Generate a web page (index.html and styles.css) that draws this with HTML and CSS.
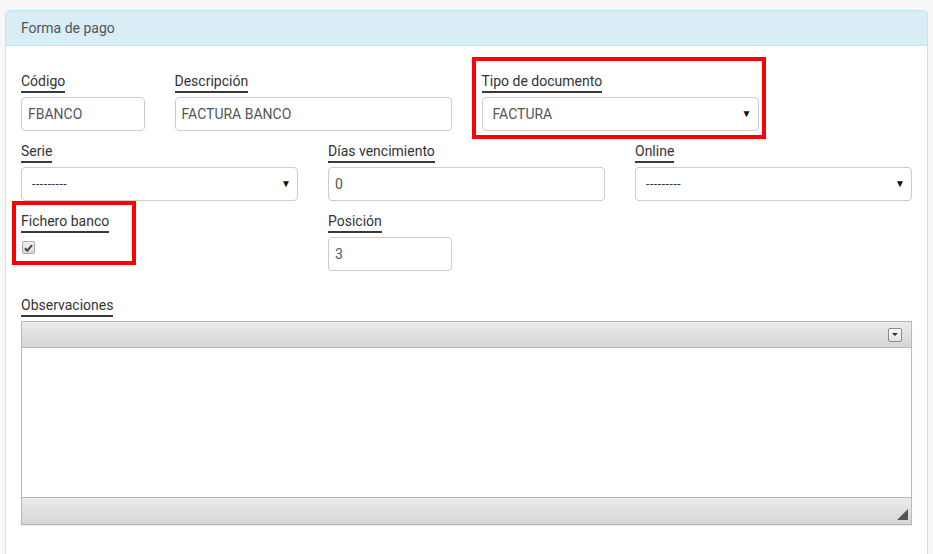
FILE: index.html
```html
<!DOCTYPE html>
<html lang="es">
<head>
<meta charset="utf-8">
<title>Forma de pago</title>
<link rel="stylesheet" href="styles.css">
</head>
<body>
<div class="panel">
  <div class="panel-heading">Forma de pago</div>
  <div class="panel-body">
    <div class="form-grid">
      <div class="field col-2">
        <label class="lbl">Código</label>
        <div class="input">FBANCO</div>
      </div>
      <div class="field col-4">
        <label class="lbl">Descripción</label>
        <div class="input">FACTURA BANCO</div>
      </div>
      <div class="field col-4 marked">
        <label class="lbl">Tipo de documento</label>
        <div class="select big"><span>FACTURA</span><span class="arrow">▼</span></div>
        <div class="highlight hl-tipo"></div>
      </div>

      <div class="field col-4">
        <label class="lbl">Serie</label>
        <div class="select"><span class="dashes">---------</span><span class="arrow">▼</span></div>
      </div>
      <div class="field col-4">
        <label class="lbl">Días vencimiento</label>
        <div class="input">0</div>
      </div>
      <div class="field col-4">
        <label class="lbl">Online</label>
        <div class="select"><span class="dashes">---------</span><span class="arrow">▼</span></div>
      </div>

      <div class="field col-4 marked">
        <label class="lbl">Fichero banco</label>
        <div class="check-row"><span class="check" role="checkbox" aria-checked="true" aria-disabled="true"><svg width="9" height="8" viewBox="0 0 9 8"><path d="M1 4.2l2.3 2.4L8 1.2" fill="none" stroke="#444" stroke-width="2"/></svg></span></div>
        <div class="highlight hl-fichero"></div>
      </div>
      <div class="field col-2">
        <label class="lbl">Posición</label>
        <div class="input">3</div>
      </div>

      <div class="field col-12 obs">
        <label class="lbl">Observaciones</label>
        <div class="editor">
          <div class="editor-bar top">
            <span class="menu-btn"><svg width="8" height="5" viewBox="0 0 8 5"><path d="M1 1h6L4 4z" fill="#333"/></svg></span>
          </div>
          <div class="editor-area"></div>
          <div class="editor-bar bottom">
            <svg class="resize" width="11" height="11" viewBox="0 0 11 11"><path d="M11 0V11H0z" fill="#555"/></svg>
          </div>
        </div>
      </div>
    </div>
  </div>
</div>
</body>
</html>
```
FILE: styles.css
```css
html, body {
  margin: 0;
  padding: 0;
}
body {
  background: #f8f8f8;
  font-family: Roboto, "Liberation Sans", Arial, sans-serif;
  font-size: 14px;
  color: #333;
  padding: 10px 5px 0 5px;
  height: 554px;
  box-sizing: border-box;
  overflow: hidden;
}
.panel {
  background: #fff;
  border: 1px solid #bce8f1;
  border-radius: 4px 4px 0 0;
  min-height: 600px;
}
.panel-heading {
  background: #d9edf7;
  border-bottom: 1px solid #bce8f1;
  color: #555;
  padding: 7px 15px;
  line-height: 20px;
  border-radius: 3px 3px 0 0;
}
.panel-body {
  padding: 25px 15px 30px 15px;
}
.form-grid {
  display: grid;
  grid-template-columns: repeat(12, 1fr);
  column-gap: 30px;
}
.col-2 { grid-column: span 2; }
.col-4 { grid-column: span 4; }
.col-12 { grid-column: span 12; }
.field {
  margin-bottom: 10px;
  position: relative;
}
.lbl {
  display: inline-block;
  line-height: 20px;
  border-bottom: 2px solid #3a3a3a;
  margin-bottom: 4px;
  color: #333;
}
.input, .select {
  box-sizing: border-box;
  height: 34px;
  border: 1px solid #ccc;
  border-radius: 4px;
  background: #fff;
  color: #555;
  line-height: 32px;
}
.input {
  padding: 0 6px;
}
.select {
  display: flex;
  justify-content: space-between;
  align-items: center;
  padding: 0 6px 0 10px;
  color: #333;
}
.select.big span:first-child {
  color: #555;
  font-size: 14px;
}
.dashes {
  font-size: 12px;
  letter-spacing: 0.6px;
}
.arrow {
  font-size: 10px;
  color: #111;
}
.check-row {
  display: flex;
  padding-top: 4px;
}
.check {
  display: inline-flex;
  align-items: center;
  justify-content: center;
  box-sizing: border-box;
  margin-left: 1px;
  width: 13px;
  height: 13px;
  border: 1px solid #aaa;
  border-radius: 2px;
  background: linear-gradient(#f0f0f0, #d8d8d8);
}
.highlight {
  position: absolute;
  border: 4px solid #ff0000;
  pointer-events: none;
}
.hl-tipo {
  top: -14px;
  left: -10px;
  right: -7px;
  bottom: -8px;
}
.hl-fichero {
  top: -10px;
  left: -9px;
  width: 116px;
  height: 56px;
}
.obs {
  margin-top: 14px;
}
.editor {
  border: 1px solid #b8b8b8;
  box-shadow: 0 1px 1px rgba(0,0,0,0.08);
}
.editor-bar {
  height: 25px;
  background: linear-gradient(#ebebeb, #d6d6d5);
  display: flex;
  align-items: center;
  justify-content: flex-end;
}
.editor-bar.top {
  border-bottom: 1px solid #b8b8b8;
  padding-right: 9px;
}
.editor-bar.bottom {
  border-top: 1px solid #b8b8b8;
  align-items: flex-end;
  padding: 0 3px 4px 0;
  box-sizing: border-box;
  height: 27px;
}
.menu-btn {
  width: 12px;
  height: 12px;
  border: 1px solid #8a8a8a;
  border-radius: 2px;
  background: linear-gradient(#fafafa, #e2e2e2);
  display: flex;
  align-items: center;
  justify-content: center;
}
.editor-area {
  height: 149px;
  background: #fff;
}
```
